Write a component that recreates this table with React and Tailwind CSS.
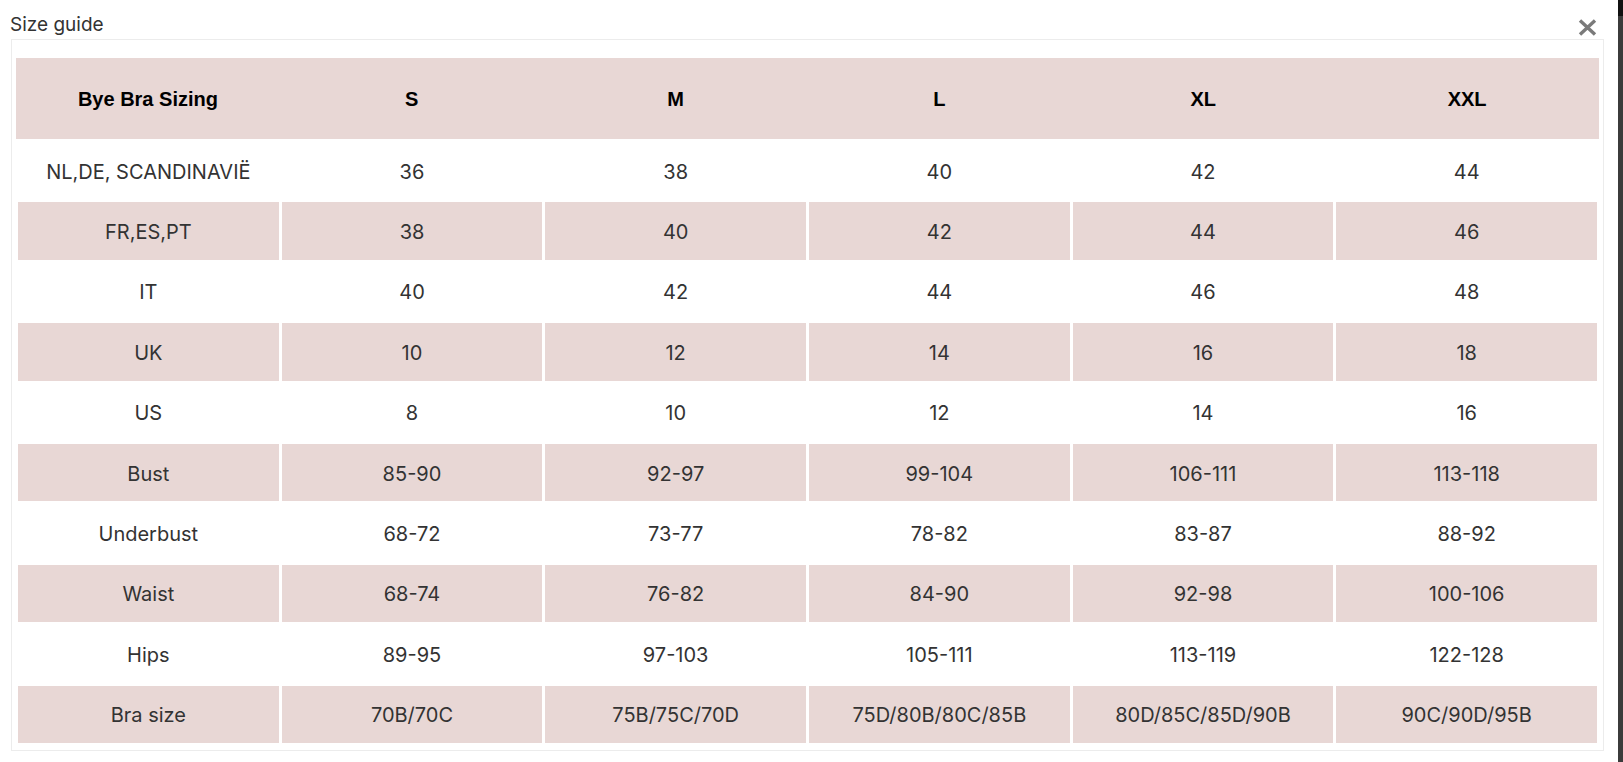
import React from "react";

const sizes = ["S", "M", "L", "XL", "XXL"];

const rows = [
  { label: "NL,DE, SCANDINAVIË", values: ["36", "38", "40", "42", "44"] },
  { label: "FR,ES,PT", values: ["38", "40", "42", "44", "46"] },
  { label: "IT", values: ["40", "42", "44", "46", "48"] },
  { label: "UK", values: ["10", "12", "14", "16", "18"] },
  { label: "US", values: ["8", "10", "12", "14", "16"] },
  { label: "Bust", values: ["85-90", "92-97", "99-104", "106-111", "113-118"] },
  { label: "Underbust", values: ["68-72", "73-77", "78-82", "83-87", "88-92"] },
  { label: "Waist", values: ["68-74", "76-82", "84-90", "92-98", "100-106"] },
  { label: "Hips", values: ["89-95", "97-103", "105-111", "113-119", "122-128"] },
  {
    label: "Bra size",
    values: ["70B/70C", "75B/75C/70D", "75D/80B/80C/85B", "80D/85C/85D/90B", "90C/90D/95B"],
  },
];

const CloseIcon = () => (
  <svg width="19" height="17" viewBox="0 0 19 17" fill="none">
    <path d="M2 1.5 L17 15.5 M17 1.5 L2 15.5" stroke="#7a7a7a" strokeWidth="3.4" strokeLinecap="butt" />
  </svg>
);

const SizeGuide = () => {
  return (
    <div className="flex h-[762px] w-full overflow-hidden bg-white font-['Inter',sans-serif] text-[#333]">
      <div className="flex w-[1618px] flex-col">
        <div className="flex h-[39px] items-start justify-between pl-[10px] pr-[21px]">
          <div className="pt-[13px] text-[19px] leading-[24px] text-[#333]">Size guide</div>
          <div className="pt-[19px]">
            <CloseIcon />
          </div>
        </div>

        <div className="ml-[11px] w-[1593px] border border-[#ececec] px-[4px] pb-[7px] pt-[18px]">
          <div className="grid h-[81px] grid-cols-6 items-center bg-[#e8d7d5] font-['Liberation_Sans',Arial,sans-serif] text-[20px] font-bold text-black">
            <div className="text-center">Bye Bra Sizing</div>
            {sizes.map((s) => (
              <div key={s} className="text-center">
                {s}
              </div>
            ))}
          </div>

          <div className="mt-[3px] flex flex-col gap-[3px] px-[2px]">
            {rows.map((row, i) => {
              const pink = i % 2 === 1;
              return (
                <div key={row.label} className="grid h-[57.4px] grid-cols-6 gap-x-[3px] text-[20px] leading-[24px]">
                  {[row.label, ...row.values].map((v, j) => (
                    <div
                      key={j}
                      className={
                        "flex items-center justify-center pt-[2px] " + (pink ? "bg-[#e8d7d5]" : "")
                      }
                    >
                      {v}
                    </div>
                  ))}
                </div>
              );
            })}
          </div>
        </div>
      </div>

      <div className="flex w-[5px] flex-col bg-[#3b3b3b]">
        <div className="h-[16px] bg-[#111]" />
      </div>
    </div>
  );
};

export default function App() {
  return <SizeGuide />;
}
